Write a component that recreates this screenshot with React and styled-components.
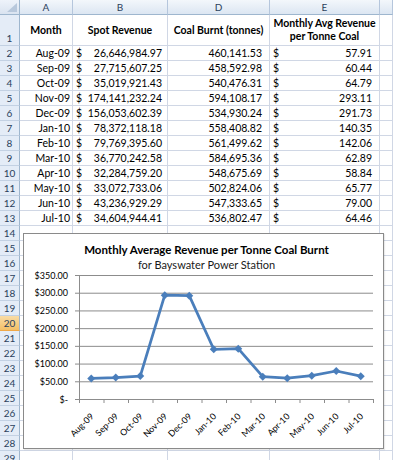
import React from 'react';
import styled, { createGlobalStyle } from 'styled-components';

const GlobalStyle = createGlobalStyle`
  body {
    margin: 0;
    background: #fff;
    overflow: hidden;
    font-family: Lato, "Liberation Sans", sans-serif;
  }
`;

const data = [
  ['Aug-09', '26,646,984.97', '460,141.53', 57.91],
  ['Sep-09', '27,715,607.25', '458,592.98', 60.44],
  ['Oct-09', '35,019,921.43', '540,476.31', 64.79],
  ['Nov-09', '174,141,232.24', '594,108.17', 293.11],
  ['Dec-09', '156,053,602.39', '534,930.24', 291.73],
  ['Jan-10', '78,372,118.18', '558,408.82', 140.35],
  ['Feb-10', '79,769,395.60', '561,499.62', 142.06],
  ['Mar-10', '36,770,242.58', '584,695.36', 62.89],
  ['Apr-10', '32,284,759.20', '548,675.69', 58.84],
  ['May-10', '33,072,733.06', '502,824.06', 65.77],
  ['Jun-10', '43,236,929.29', '547,333.65', 79.0],
  ['Jul-10', '34,604,944.41', '536,802.47', 64.46],
];

const Sheet = styled.div`
  position: relative;
  display: grid;
  grid-template-columns: 20px 53px 95px 102px 110px 1fr;
  grid-template-rows: 15px 31px;
  grid-auto-rows: 15px;
  width: 393px;
  height: 460px;
  overflow: hidden;
  font-size: 10.5px;
  color: #000;
`;

const Corner = styled.div`
  position: relative;
  background: linear-gradient(#eef3fa, #d9e3f0);
  border-right: 1px solid #9eb6ce;
  border-bottom: 1px solid #9eb6ce;
  box-sizing: border-box;

  &::after {
    content: '';
    position: absolute;
    right: 2px;
    bottom: 2px;
    border-left: 10px solid transparent;
    border-bottom: 9px solid #b8c8dc;
  }
`;

const ColHead = styled.div`
  display: flex;
  align-items: center;
  justify-content: center;
  background: linear-gradient(#f3f7fb, #dce6f2);
  border-right: 1px solid #b5c6dc;
  border-bottom: 1px solid #9eb6ce;
  box-sizing: border-box;
  font-size: 10px;
  color: #2b3f5c;
`;

const RowHead = styled.div`
  display: flex;
  align-items: flex-end;
  justify-content: center;
  padding-bottom: 1px;
  background: ${(p) => (p.$active ? 'linear-gradient(#f9dca6, #f3bf66)' : '#e4ecf7')};
  border-right: 1px solid #9eb6ce;
  border-bottom: 1px solid ${(p) => (p.$active ? '#f0a848' : '#c3d1e3')};
  box-sizing: border-box;
  font-size: 10px;
  line-height: 12px;
  color: #2b3f5c;
`;

const Cell = styled.div`
  display: flex;
  align-items: flex-end;
  justify-content: flex-end;
  padding: 0 ${(p) => p.$pad || 0}px 1px 3px;
  border-right: 1px solid #d0d7e5;
  border-bottom: 1px solid #d0d7e5;
  box-sizing: border-box;
  line-height: 12px;
  white-space: nowrap;
`;

const HeadCell = styled(Cell)`
  align-items: center;
  justify-content: center;
  padding: 0 2px;
  font-weight: 700;
  text-align: center;
  line-height: 13px;
  white-space: normal;
`;

const MoneyCell = styled(Cell)`
  justify-content: space-between;
`;

const Chart = styled.div`
  position: absolute;
  left: 23px;
  top: 233px;
  width: 361px;
  height: 216px;
  box-sizing: border-box;
  border: 1px solid #8a8a8a;
  background: #fff;
  box-shadow: 1px 1px 1px rgba(0, 0, 0, 0.08);
`;

const ChartHeading = styled.div`
  height: 34px;
  box-sizing: border-box;
  padding: 8px 0 0 6px;
  text-align: center;
`;

const ChartTitle = styled.div`
  font-size: 11.5px;
  font-weight: 700;
  line-height: 15px;
  color: #000;
`;

const ChartSubtitle = styled.div`
  font-size: 11px;
  line-height: 15px;
  color: #1a1a1a;
`;

const Plot = styled.svg`
  display: block;
  overflow: visible;
  font-family: Lato, "Liberation Sans", sans-serif;
`;

const X0 = 55;
const X1 = 349;
const YTOP = 7;
const YBOT = 131;
const STEP = (X1 - X0) / 12;
const yOf = (v) => YBOT - (v / 350) * (YBOT - YTOP);

function LineChart() {
  const pts = data.map((r, i) => [X0 + STEP * (i + 0.5), yOf(r[3])]);
  const ticks = [0, 50, 100, 150, 200, 250, 300, 350];
  return (
    <Plot width="359" height="180">
      {ticks.map((t) => (
        <g key={t}>
          <line x1={X0 - 4} x2={X1} y1={yOf(t) + 0.5} y2={yOf(t) + 0.5} stroke="#8c8c8c" strokeWidth="1" />
          <text x="44" y={yOf(t) + 3.5} fontSize="9" textAnchor="end" fill="#000">
            {t === 0 ? '$-' : `$${t}.00`}
          </text>
        </g>
      ))}
      <line x1={X0 + 0.5} x2={X0 + 0.5} y1={YTOP} y2={YBOT} stroke="#8c8c8c" />
      {Array.from({ length: 13 }, (_, i) => (
        <line key={i} x1={X0 + STEP * i + 0.5} x2={X0 + STEP * i + 0.5} y1={YBOT} y2={YBOT + 4} stroke="#8c8c8c" />
      ))}
      {data.map((r, i) => {
        const x = X0 + STEP * (i + 0.5) + 3;
        const y = 149;
        return (
          <text key={r[0]} x={x} y={y} fontSize="8.8" textAnchor="end" transform={`rotate(-45 ${x} ${y})`} fill="#000">
            {r[0]}
          </text>
        );
      })}
      <polyline
        points={pts.map((p) => p.join(',')).join(' ')}
        fill="none"
        stroke="#4a7ebb"
        strokeWidth="2.75"
        strokeLinejoin="round"
      />
      {pts.map(([x, y], i) => (
        <polygon key={i} points={`${x},${y - 4} ${x + 4},${y} ${x},${y + 4} ${x - 4},${y}`} fill="#4a7ebb" />
      ))}
    </Plot>
  );
}

function App() {
  const extraRows = Array.from({ length: 16 }, (_, i) => 14 + i);
  return (
    <>
      <GlobalStyle />
      <Sheet>
        <Corner />
        <ColHead>A</ColHead>
        <ColHead>B</ColHead>
        <ColHead>D</ColHead>
        <ColHead>E</ColHead>
        <ColHead />

        <RowHead>1</RowHead>
        <HeadCell>Month</HeadCell>
        <HeadCell>Spot Revenue</HeadCell>
        <HeadCell>Coal Burnt (tonnes)</HeadCell>
        <HeadCell>Monthly Avg Revenue per Tonne Coal</HeadCell>
        <Cell />

        {data.map((r, i) => (
          <React.Fragment key={r[0]}>
            <RowHead>{i + 2}</RowHead>
            <Cell $pad={2}>{r[0]}</Cell>
            <MoneyCell $pad={5}>
              <span>$</span>
              <span>{r[1]}</span>
            </MoneyCell>
            <Cell $pad={7}>{r[2]}</Cell>
            <MoneyCell $pad={7}>
              <span>$</span>
              <span>{r[3].toFixed(2)}</span>
            </MoneyCell>
            <Cell />
          </React.Fragment>
        ))}

        {extraRows.map((n) => (
          <React.Fragment key={n}>
            <RowHead $active={n === 20}>{n}</RowHead>
            <Cell />
            <Cell />
            <Cell />
            <Cell />
            <Cell />
          </React.Fragment>
        ))}

        <Chart>
          <ChartHeading>
            <ChartTitle>Monthly Average Revenue per Tonne Coal Burnt</ChartTitle>
            <ChartSubtitle>for Bayswater Power Station</ChartSubtitle>
          </ChartHeading>
          <LineChart />
        </Chart>
      </Sheet>
    </>
  );
}

export default App;
